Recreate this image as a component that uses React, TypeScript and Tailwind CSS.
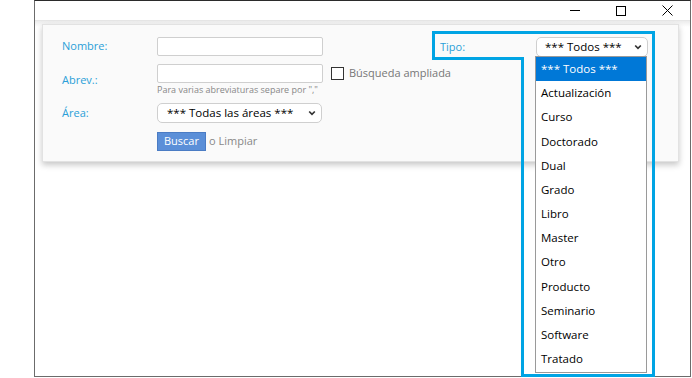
import React from 'react';

const TIPOS = [
  '*** Todos ***',
  'Actualización',
  'Curso',
  'Doctorado',
  'Dual',
  'Grado',
  'Libro',
  'Master',
  'Otro',
  'Producto',
  'Seminario',
  'Software',
  'Tratado',
];

const Chevron = () => (
  <svg width="8" height="6" viewBox="0 0 8 6" className="shrink-0">
    <path d="M1.2 1.5 L4 4.3 L6.8 1.5" fill="none" stroke="#333" strokeWidth="1.7" />
  </svg>
);

const App: React.FC = () => {
  return (
    <div className="relative w-[692px] h-[378px] bg-white overflow-hidden" style={{ fontFamily: '"Open Sans", "Liberation Sans", sans-serif' }}>
      {/* Window */}
      <div className="ml-[34px] w-[657px] h-[377px] border-l border-r border-b border-[#6b6b6b] border-t border-t-[#2b2b2b] flex flex-col bg-white">
        {/* Title bar */}
        <div className="h-[20px] flex items-center justify-end shrink-0 border-b border-[#e6e6e6]">
          <div className="w-[46px] h-full flex items-center justify-center">
            <div className="w-[10px] h-px bg-black" />
          </div>
          <div className="w-[46px] h-full flex items-center justify-center">
            <div className="w-[10px] h-[10px] border border-black" />
          </div>
          <div className="w-[46px] h-full flex items-center justify-center">
            <svg width="11" height="11" viewBox="0 0 11 11">
              <path d="M0.5 0.5 L10.5 10.5 M10.5 0.5 L0.5 10.5" stroke="#000" strokeWidth="1" />
            </svg>
          </div>
        </div>

        {/* Body */}
        <div className="flex-1 bg-gradient-to-b from-[#ececec] to-white to-[6px] pt-[3px] pl-[7px] pr-[11px]">
          <div className="bg-[#fafafa] border border-[#e2e2e2] shadow-[0_3px_6px_rgba(0,0,0,0.22)] h-[138px] flex pl-[19px] pr-[30px] pt-[12px]">
            {/* Left column */}
            <div className="flex flex-col flex-1 min-w-0">
              <div className="flex items-center h-[19px]">
                <span className="w-[95px] shrink-0 text-[11px] text-[#2a9fd8]">Nombre:</span>
                <div className="w-[166px] shrink-0 h-[19px] bg-white border border-[#cfcfcf] rounded-[2px]" />
              </div>
              <div className="flex mt-[8px]">
                <span className="w-[95px] shrink-0 text-[11px] text-[#2a9fd8] pt-[8px]">Abrev.:</span>
                <div className="flex flex-col">
                  <div className="flex items-center whitespace-nowrap">
                    <div className="w-[166px] shrink-0 h-[19px] bg-white border border-[#cfcfcf] rounded-[2px]" />
                    <div className="ml-[8px] shrink-0 w-[13px] h-[13px] border border-[#333] bg-white" />
                    <span className="ml-[5px] text-[11px] text-[#777]">Búsqueda ampliada</span>
                  </div>
                  <span className="text-[9px] leading-[12px] mt-[1px] text-[#888] whitespace-nowrap">Para varias abreviaturas separe por ","</span>
                </div>
              </div>
              <div className="flex items-center mt-[7px]">
                <span className="w-[95px] shrink-0 text-[11px] text-[#2a9fd8]">Área:</span>
                <div className="w-[165px] shrink-0 h-[20px] bg-white border border-[#cfcfcf] rounded-[5px] flex items-center pl-[9px] pr-[5px]">
                  <span className="flex-1 text-[11.5px] text-black leading-none whitespace-nowrap">*** Todas las áreas ***</span>
                  <Chevron />
                </div>
              </div>
              <div className="flex items-center mt-[9px] pl-[95px]">
                <div className="h-[19px] px-[6px] bg-[#5b8fd8] border border-[#4b7cc4] text-white text-[11px] flex items-center">Buscar</div>
                <span className="ml-[3px] text-[11px] text-[#888]">o Limpiar</span>
              </div>
            </div>

            {/* Right column */}
            <div className="w-[208px] shrink-0 flex items-start">
              <span className="text-[11px] text-[#2a9fd8] w-[96px] shrink-0 pt-[2px]">Tipo:</span>
              <div className="w-[112px] shrink-0 h-[20px] bg-white border border-[#cfcfcf] rounded-[5px] flex items-center pl-[8px] pr-[5px]">
                <span className="flex-1 text-[11.5px] text-black leading-none whitespace-nowrap">*** Todos ***</span>
                <Chevron />
              </div>
            </div>
          </div>
        </div>
      </div>

      {/* Open dropdown list */}
      <div className="absolute left-[535px] top-[56px] w-[112px] h-[317px] bg-white border border-[#9a9a9a]">
        {TIPOS.map((t, i) => (
          <div
            key={t}
            className={
              i === 0
                ? 'h-[24.2px] flex items-center pl-[5px] pb-[1px] text-[11.5px] bg-[#0078d7] text-white'
                : 'h-[24.2px] flex items-center pl-[5px] pb-[1px] text-[11.5px] text-black'
            }
          >
            {t}
          </div>
        ))}
      </div>

      {/* Highlight outline */}
      <svg className="absolute left-0 top-0 pointer-events-none" width="692" height="378">
        <path d="M433.5 32.5 H653.5 V375.5 H522.5 V58.5 H433.5 Z" fill="none" stroke="#00a4e4" strokeWidth="3" />
      </svg>
    </div>
  );
};

export default App;
